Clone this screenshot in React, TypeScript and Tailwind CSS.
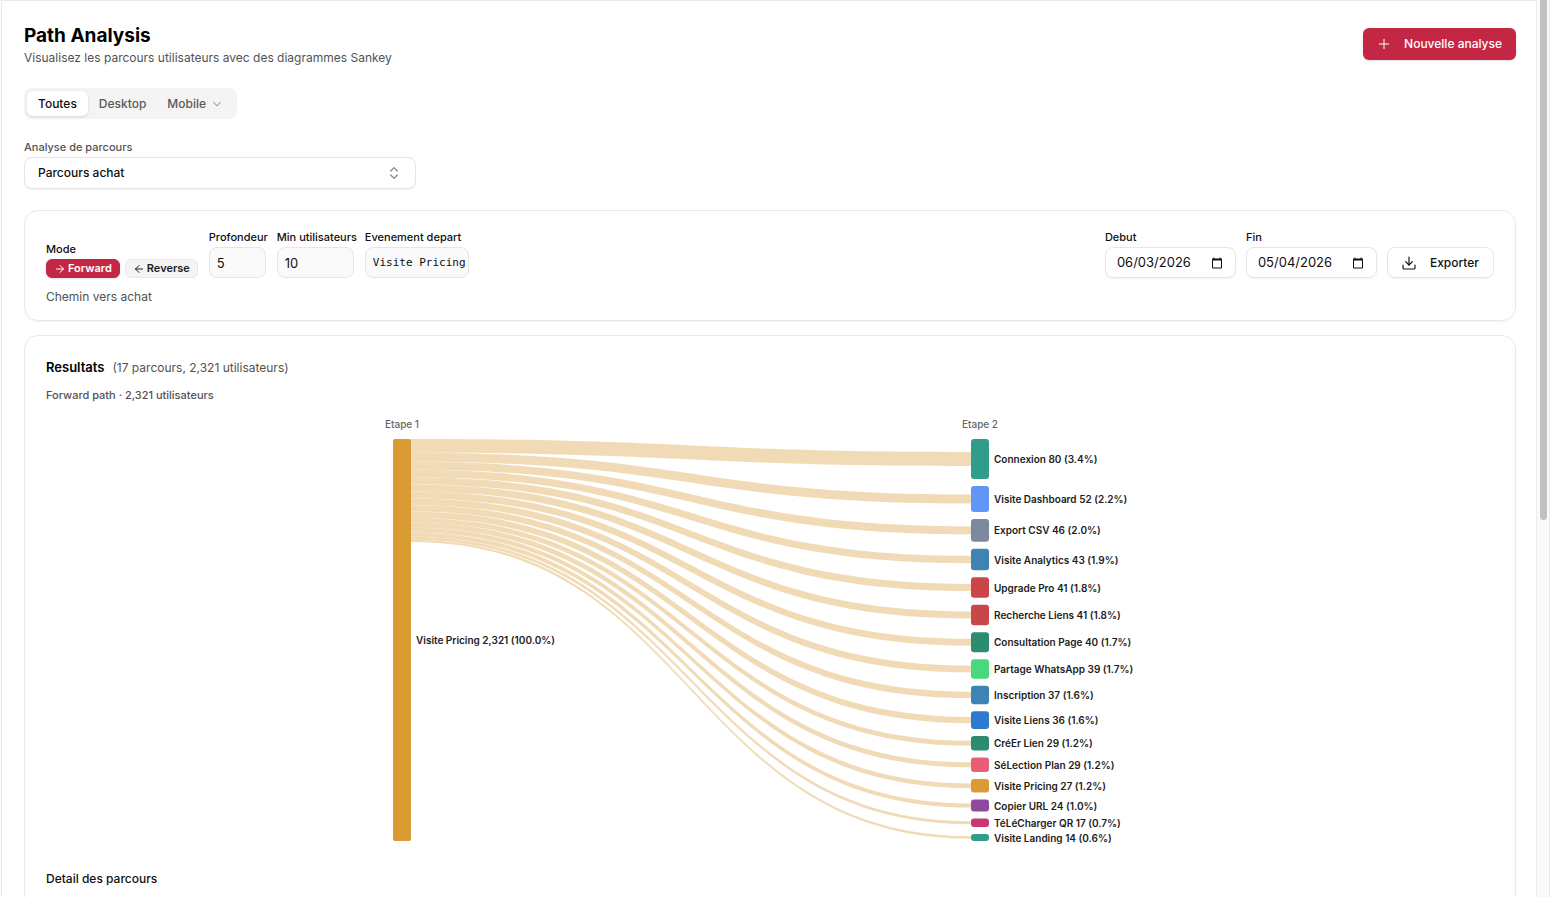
import { useId, useState } from "react";
import clsx from "clsx";
import { ArrowLeft, ArrowRight, ChevronDown, ChevronsUpDown, Download, Plus } from "lucide-react";

interface PathStep {
  label: string;
  count: number;
  share: string;
  color: string;
}

const SOURCE: PathStep = { label: "Visite Pricing", count: 2321, share: "100.0", color: "#d99b32" };

const TARGETS: PathStep[] = [
  { label: "Connexion", count: 80, share: "3.4", color: "#2f9c8c" },
  { label: "Visite Dashboard", count: 52, share: "2.2", color: "#6096f8" },
  { label: "Export CSV", count: 46, share: "2.0", color: "#7b899d" },
  { label: "Visite Analytics", count: 43, share: "1.9", color: "#3e83b3" },
  { label: "Upgrade Pro", count: 41, share: "1.8", color: "#c9464b" },
  { label: "Recherche Liens", count: 41, share: "1.8", color: "#c9464b" },
  { label: "Consultation Page", count: 40, share: "1.7", color: "#2b8c6f" },
  { label: "Partage WhatsApp", count: 39, share: "1.7", color: "#47d97c" },
  { label: "Inscription", count: 37, share: "1.6", color: "#3e83b3" },
  { label: "Visite Liens", count: 36, share: "1.6", color: "#2f7ace" },
  { label: "CréEr Lien", count: 29, share: "1.2", color: "#2b8c6f" },
  { label: "SéLection Plan", count: 29, share: "1.2", color: "#e85d78" },
  { label: "Visite Pricing", count: 27, share: "1.2", color: "#d99b32" },
  { label: "Copier URL", count: 24, share: "1.0", color: "#8e4a9e" },
  { label: "TéLéCharger QR", count: 17, share: "0.7", color: "#c93872" },
  { label: "Visite Landing", count: 14, share: "0.6", color: "#2f9c8c" },
];

const CHART = { width: 794, height: 430, top: 20, bodyHeight: 402, nodeWidth: 18, gap: 7, leftX: 20, rightX: 598 };

const formatStep = ({ label, count, share }: PathStep) => `${label} ${count.toLocaleString("en-US")} (${share}%)`;

function SankeyChart() {
  const { width, height, top, bodyHeight, nodeWidth, gap, leftX, rightX } = CHART;
  const total = TARGETS.reduce((sum, t) => sum + t.count, 0);
  const nodeScale = (bodyHeight - gap * (TARGETS.length - 1)) / total;
  const linkScale = bodyHeight / SOURCE.count;
  const x0 = leftX + nodeWidth;
  const x1 = rightX;
  const mid = (x0 + x1) / 2;

  let sourceY = top;
  let targetY = top;
  const rows = TARGETS.map((target) => {
    const h = target.count * nodeScale;
    const link = target.count * linkScale;
    const row = { target, y: targetY, h, link, from: sourceY, to: targetY + (h - link) / 2 };
    sourceY += link;
    targetY += h + gap;
    return row;
  });

  return (
    <svg
      viewBox={`0 0 ${width} ${height}`}
      width={width}
      height={height}
      role="img"
      aria-label="Diagramme Sankey"
      className="mx-auto block max-w-full"
    >
      <g className="fill-[#666666] text-[10px] font-medium" textAnchor="middle">
        <text x={leftX + nodeWidth / 2} y={9}>
          Etape 1
        </text>
        <text x={rightX + nodeWidth / 2} y={9}>
          Etape 2
        </text>
      </g>

      <g fill={SOURCE.color} opacity={0.35}>
        {rows.map(({ target, from, to, link }) => (
          <path
            key={target.label}
            d={`M${x0},${from} C${mid},${from} ${mid},${to} ${x1},${to} L${x1},${to + link} C${mid},${to + link} ${mid},${from + link} ${x0},${from + link} Z`}
          />
        ))}
      </g>

      <rect x={leftX} y={top} width={nodeWidth} height={bodyHeight} rx={2} fill={SOURCE.color} />
      {rows.map(({ target, y, h }) => (
        <rect key={target.label} x={rightX} y={y} width={nodeWidth} height={h} rx={3} fill={target.color} />
      ))}

      <g className="fill-[#1c1c1c] text-[10px] font-semibold" dominantBaseline="central">
        <text x={x0 + 5} y={top + bodyHeight / 2}>
          {formatStep(SOURCE)}
        </text>
        {rows.map(({ target, y, h }) => (
          <text key={target.label} x={rightX + nodeWidth + 5} y={y + h / 2}>
            {formatStep(target)}
          </text>
        ))}
      </g>
    </svg>
  );
}

function DeviceTabs() {
  const [active, setActive] = useState("Toutes");

  return (
    <div className="flex w-fit items-center rounded-lg bg-[#f4f4f4] p-[3px]">
      {["Toutes", "Desktop", "Mobile"].map((tab) => (
        <button
          key={tab}
          type="button"
          onClick={() => setActive(tab)}
          className={clsx(
            "flex h-[25px] items-center gap-1 rounded-md text-xs font-medium",
            tab === "Mobile" ? "px-2.5" : "px-[11px]",
            active === tab ? "bg-white text-[#0f0f0f] shadow-sm" : "text-[#595959]"
          )}
        >
          {tab}
          {tab === "Mobile" && <ChevronDown className="h-3.5 w-3.5 opacity-60" strokeWidth={1.75} />}
        </button>
      ))}
    </div>
  );
}

function Field({ label, value, width, className }: { label: string; value: string; width: string; className: string }) {
  const id = useId();

  return (
    <div className={clsx("flex flex-col gap-0.5", width)}>
      <label htmlFor={id} className="text-[11px] leading-4 font-medium whitespace-nowrap">
        {label}
      </label>
      <input
        id={id}
        type="text"
        defaultValue={value}
        className={clsx("h-[31px] w-full rounded-lg border border-[#e6e6e6] bg-[#fafafa] pl-[7px]", className)}
      />
    </div>
  );
}

function DateField({ label, value }: { label: string; value: string }) {
  const id = useId();

  return (
    <div className="flex flex-col gap-0.5">
      <label htmlFor={id} className="text-[11px] leading-4 font-medium">
        {label}
      </label>
      <div className="flex h-[31px] w-[131px] items-center rounded-lg border border-[#e6e6e6] pr-3 pl-[11px] shadow-xs">
        <input id={id} type="text" defaultValue={value} className="w-full min-w-0 text-[13px] outline-none" />
        <svg viewBox="0 0 12 12" className="h-3 w-3 shrink-0" fill="none" aria-hidden="true">
          <path d="M1.5 2.5h9v8.5h-9z" stroke="currentColor" />
          <path d="M1 1.5h10v2H1zM2.5 0.5h1v1h-1zM8.5 0.5h1v1h-1z" fill="currentColor" />
        </svg>
      </div>
    </div>
  );
}

function ModeToggle() {
  const [mode, setMode] = useState("forward");
  const base = "flex h-[19px] items-center gap-0.5 rounded-md border px-[7px] text-[11px] font-semibold";
  const on = "border-[#c42744] bg-[#c42744] text-white shadow-sm";
  const off = "border-[#e8e8e8] bg-[#f4f4f4] text-[#1c1c1c]";

  return (
    <div className="flex flex-col gap-0.5">
      <span className="text-[11px] leading-4 font-medium">Mode</span>
      <div className="flex gap-[5px]">
        <button type="button" onClick={() => setMode("forward")} className={clsx(base, mode === "forward" ? on : off)}>
          <ArrowRight className="h-3 w-3" />
          Forward
        </button>
        <button type="button" onClick={() => setMode("reverse")} className={clsx(base, mode === "reverse" ? on : off)}>
          <ArrowLeft className="h-3 w-3" />
          Reverse
        </button>
      </div>
    </div>
  );
}

export default function App() {
  return (
    <div className="flex h-screen overflow-hidden bg-[#fafafa] pl-px font-['Inter','Liberation_Sans',sans-serif] text-[#0f0f0f]">
      <main className="min-w-0 flex-1 overflow-hidden border-t border-l border-[#ebebeb] bg-white pt-[23px] pr-5 pl-[22px]">
        <header className="flex items-start justify-between">
          <div>
            <h1 className="text-[19px] leading-6 font-bold text-black">Path Analysis</h1>
            <p className="text-xs leading-5 text-[#525252]">
              Visualisez les parcours utilisateurs avec des diagrammes Sankey
            </p>
          </div>
          <button
            type="button"
            className="mt-1 flex h-8 items-center gap-3 rounded-md bg-[#c42744] pr-3.5 pl-[13px] text-xs font-medium text-white shadow-sm"
          >
            <Plus className="h-4 w-4" strokeWidth={1.5} />
            Nouvelle analyse
          </button>
        </header>

        <div className="mt-5">
          <DeviceTabs />
        </div>

        <div className="mt-5 flex w-[392px] max-w-full flex-col gap-0.5">
          <label htmlFor="analysis" className="text-[11px] leading-4 font-medium text-[#525252]">
            Analyse de parcours
          </label>
          <div className="relative">
            <select
              id="analysis"
              className="h-8 w-full appearance-none rounded-lg border border-[#e6e6e6] bg-white px-[13px] text-xs font-medium shadow-xs"
            >
              <option>Parcours achat</option>
            </select>
            <ChevronsUpDown
              className="pointer-events-none absolute top-2 right-3.5 h-4 w-4 text-[#808080]"
              strokeWidth={1.75}
            />
          </div>
        </div>

        <section className="mt-[21px] rounded-[14px] border border-[#e8e8e8] px-[21px] pt-[18px] pb-[13px] shadow-xs">
          <div className="flex flex-wrap items-end justify-between gap-4">
            <div className="flex items-end gap-[11px]">
              <ModeToggle />
              <Field label="Profondeur" value="5" width="w-[57px]" className="text-[13px]" />
              <Field label="Min utilisateurs" value="10" width="w-[77px]" className="text-[13px]" />
              <Field
                label="Evenement depart"
                value="Visite Pricing"
                width="w-[104px]"
                className="font-['DejaVu_Sans_Mono',monospace] text-[11px]"
              />
            </div>
            <div className="flex items-end gap-2.5">
              <DateField label="Debut" value="06/03/2026" />
              <DateField label="Fin" value="05/04/2026" />
              <button
                type="button"
                className="flex h-[31px] items-center gap-[13px] rounded-lg border border-[#e6e6e6] pr-3.5 pl-[13px] text-xs font-medium shadow-xs"
              >
                <Download className="h-4 w-4" strokeWidth={1.75} />
                Exporter
              </button>
            </div>
          </div>
          <p className="mt-[9px] text-xs leading-5 text-[#525252]">Chemin vers achat</p>
        </section>

        <section className="mt-3.5 rounded-[14px] border border-[#e8e8e8] px-[21px] pt-[21px] pb-10 shadow-xs">
          <h2 className="flex items-baseline gap-2 text-[13px] leading-5 font-semibold text-black">
            Resultats
            <span className="text-xs font-normal text-[#525252]">(17 parcours, 2,321 utilisateurs)</span>
          </h2>
          <p className="mt-2.5 mb-4 text-[11px] leading-4 font-medium text-[#525252]">Forward path · 2,321 utilisateurs</p>
          <SankeyChart />
          <h3 className="mt-5 text-xs leading-5 font-medium">Detail des parcours</h3>
        </section>
      </main>

      <div className="flex w-3.5 shrink-0 justify-center border-x border-[#ebebeb] bg-[#fafafa]" aria-hidden="true">
        <div className="h-[58%] w-[7px] rounded-b-full bg-[#c1c1c1]" />
      </div>
    </div>
  );
}
